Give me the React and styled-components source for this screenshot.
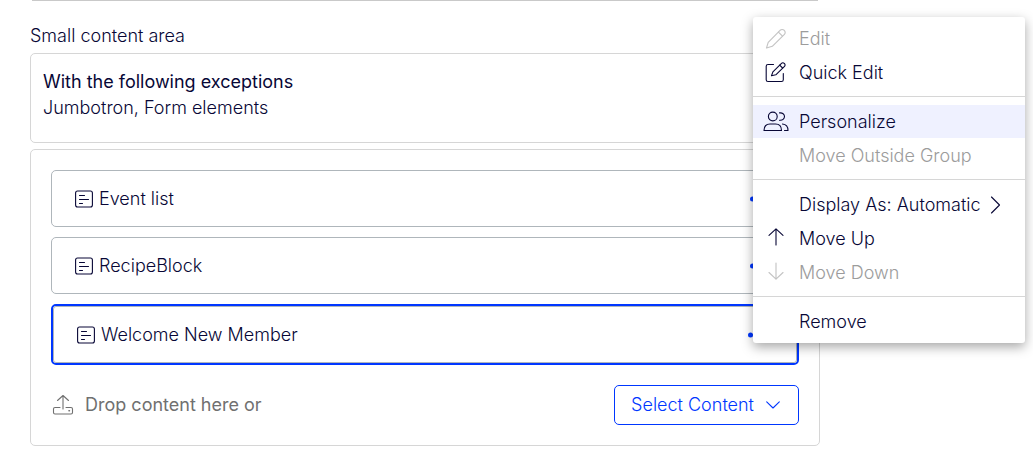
import React from "react";
import styled, { createGlobalStyle, css } from "styled-components";

const GlobalStyle = createGlobalStyle`
  *, *::before, *::after { box-sizing: border-box; }
  body {
    margin: 0;
    background: #ffffff;
    color: #080736;
    font-family: Inter, "Liberation Sans", sans-serif;
    font-size: 18px;
    font-weight: 300;
    line-height: 26px;
  }
  button { font: inherit; cursor: pointer; }
  svg { display: block; flex: none; }
`;

const Page = styled.div`
  position: relative;
`;

const Main = styled.main`
  padding: 0 213px 16px 30px;
`;

const PreviousPanel = styled.div`
  height: 1px;
  margin: 0 2px;
  background: #c9c9c9;
`;

const FieldLabel = styled.h2`
  margin: 22px 0 4px;
  font-size: 18px;
  font-weight: 300;
  line-height: 26px;
`;

const Panel = styled.section`
  border: 1px solid #d6d6d6;
  border-radius: 5px;
`;

const RulesPanel = styled(Panel)`
  padding: 15px 12px 21px;
  margin-bottom: 6px;
`;

const RulesTitle = styled.h3`
  margin: 0;
  font-size: 18px;
  font-weight: 400;
  line-height: 26px;
`;

const RulesText = styled.p`
  margin: 0;
`;

const ContentPanel = styled(Panel)`
  padding: 20px;
`;

const BlockList = styled.ul`
  display: flex;
  flex-direction: column;
  gap: 10px;
  margin: 0 0 20px;
  padding: 0;
  list-style: none;
`;

const BlockFrame = styled.li`
  border-radius: 5px;
  ${(p) =>
    p.$selected &&
    css`
      border: 2px solid #0037ff;
    `}
`;

const BlockRow = styled.div`
  display: flex;
  align-items: center;
  gap: 6px;
  height: 57px;
  padding: 0 23px;
  border: 1px solid #afb6bb;
  border-radius: ${(p) => (p.$selected ? 3 : 5)}px;
`;

const BlockName = styled.span`
  flex: 1;
`;

const MoreButton = styled.button`
  display: flex;
  padding: 0;
  border: 0;
  background: none;
  color: #0037ff;
`;

const DropZone = styled.div`
  display: flex;
  align-items: center;
  gap: 10px;
  color: #707070;
  font-weight: 400;
`;

const DropText = styled.span`
  flex: 1;
`;

const SelectButton = styled.button`
  display: flex;
  align-items: center;
  gap: 12px;
  height: 40px;
  padding: 0 18px 0 16px;
  border: 1px solid #0037ff;
  border-radius: 5px;
  background: #ffffff;
  color: #0037ff;
  font-weight: 300;
`;

const Menu = styled.div`
  position: absolute;
  top: 17px;
  right: 8px;
  display: flex;
  flex-direction: column;
  gap: 1px;
  width: 272px;
  padding: 5px 0;
  border-radius: 3px;
  background: #ffffff;
  box-shadow: 0 4px 12px rgba(0, 0, 0, 0.35);
`;

const MenuItem = styled.button`
  display: flex;
  align-items: center;
  height: 33px;
  padding: 0;
  border: 0;
  background: ${(p) => (p.$active ? "#eff1ff" : "transparent")};
  color: #080736;
  text-align: left;

  &:disabled {
    color: #9c9c9c;
    cursor: default;
  }
`;

const MenuIcon = styled.span`
  display: flex;
  justify-content: center;
  width: 46px;
  opacity: ${(p) => (p.$faded ? 0.6 : 1)};
`;

const MenuArrow = styled.span`
  margin-left: 9px;
`;

const Separator = styled.hr`
  width: 100%;
  height: 1px;
  margin: 6px 0 7px;
  border: 0;
  background: #d6d6d6;
`;

const Icon = ({ width = 24, height = 24, children }) => (
  <svg
    width={width}
    height={height}
    viewBox={`0 0 ${width} ${height}`}
    fill="none"
    stroke="currentColor"
    strokeWidth="1.1"
    strokeLinecap="round"
    strokeLinejoin="round"
    aria-hidden="true"
  >
    {children}
  </svg>
);

const BlockIcon = () => (
  <Icon width={18} height={18}>
    <rect x="0.6" y="1" width="16.8" height="16" rx="2" />
    <path d="M4.5 5.5h5M4.5 9.5h9M4.5 13.5h3" />
  </Icon>
);

const DotsIcon = () => (
  <svg width="25" height="6" viewBox="0 0 25 6" fill="currentColor" aria-hidden="true">
    <circle cx="2.5" cy="3" r="2.5" />
    <circle cx="12.5" cy="3" r="2.5" />
    <circle cx="22.5" cy="3" r="2.5" />
  </svg>
);

const UploadIcon = () => (
  <Icon>
    <path d="M12 16V2.500M6.500 7.500L12 2.500L17.500 7.500" />
    <path d="M9 14.500H4a1.500 1.500 0 0 0-1.500 1.500V19.500a1.500 1.500 0 0 0 1.500 1.500H20a1.500 1.500 0 0 0 1.500-1.500V16a1.500 1.500 0 0 0-1.500-1.500H15" />
    <path d="M18 17.800h.4" strokeWidth="1.600" />
  </Icon>
);

const ChevronDown = () => (
  <Icon width={14} height={8}>
    <path d="M0.7 0.8L7 7L13.3 0.8" />
  </Icon>
);

const ChevronRight = () => (
  <Icon width={11} height={18}>
    <path d="M1.5 1L9.5 9L1.5 17" />
  </Icon>
);

const PencilIcon = () => (
  <Icon width={22} height={22}>
    <path d="M1.500 20L3.200 14.300L15.300 2.200a2.600 2.600 0 0 1 3.700 0l.4.4a2.600 2.600 0 0 1 0 3.700L7.300 18.300Z" />
    <path d="M13.400 4.100l4.100 4.100" />
  </Icon>
);

const QuickEditIcon = () => (
  <Icon width={24} height={22}>
    <path d="M9.500 2.500H4A1.800 1.800 0 0 0 2.200 4.300V17.700A1.800 1.800 0 0 0 4 19.500H17.500a1.800 1.800 0 0 0 1.800-1.800V11.500" />
    <path d="M7.500 13.800L8.900 9.900L17.500 1.300a1.900 1.900 0 0 1 2.700 0l.3.3a1.900 1.900 0 0 1 0 2.700L11.800 12.800Z" />
    <path d="M15.700 3.100l2.900 2.900" />
  </Icon>
);

const PeopleIcon = () => (
  <Icon width={26} height={22}>
    <circle cx="9.800" cy="5.500" r="4.400" />
    <path d="M1 19.500c0-4.400 2.500-6.500 6-6.500h5.500c3.500 0 6 2.100 6 6.500Z" />
    <path d="M16.500 1.900c3 -.4 5 1.300 5 3.600s-2 4.100-5 3.700M19.500 13c3.300.3 5.500 2.500 5.500 6.500h-3.500" />
  </Icon>
);

const ArrowUp = () => (
  <Icon width={16} height={22}>
    <path d="M8 17V0.800M1 7.300L8 0.800L15 7.300" />
  </Icon>
);

const ArrowDown = () => (
  <Icon width={16} height={22}>
    <path d="M8 1V17.200M1 10.500L8 17.200L15 10.500" />
  </Icon>
);

const blocks = [
  { name: "Event list" },
  { name: "RecipeBlock" },
  { name: "Welcome New Member", selected: true },
];

const menuGroups = [
  [
    { label: "Edit", icon: PencilIcon, disabled: true },
    { label: "Quick Edit", icon: QuickEditIcon },
  ],
  [
    { label: "Personalize", icon: PeopleIcon, active: true },
    { label: "Move Outside Group", disabled: true },
  ],
  [
    { label: "Display As: Automatic", submenu: true },
    { label: "Move Up", icon: ArrowUp },
    { label: "Move Down", icon: ArrowDown, disabled: true },
  ],
  [{ label: "Remove" }],
];

export default function App() {
  return (
    <Page>
      <GlobalStyle />
      <Main>
        <PreviousPanel />
        <FieldLabel>Small content area</FieldLabel>
        <RulesPanel>
          <RulesTitle>With the following exceptions</RulesTitle>
          <RulesText>Jumbotron, Form elements</RulesText>
        </RulesPanel>
        <ContentPanel>
          <BlockList>
            {blocks.map((block) => (
              <BlockFrame key={block.name} $selected={block.selected}>
                <BlockRow $selected={block.selected}>
                  <BlockIcon />
                  <BlockName>{block.name}</BlockName>
                  <MoreButton type="button" aria-label={`Options for ${block.name}`}>
                    <DotsIcon />
                  </MoreButton>
                </BlockRow>
              </BlockFrame>
            ))}
          </BlockList>
          <DropZone>
            <UploadIcon />
            <DropText>Drop content here or</DropText>
            <SelectButton type="button">
              Select Content
              <ChevronDown />
            </SelectButton>
          </DropZone>
        </ContentPanel>
      </Main>
      <Menu role="menu">
        {menuGroups.map((group, index) => (
          <React.Fragment key={group[0].label}>
            {index > 0 && <Separator />}
            {group.map(({ label, icon: Glyph, disabled, active, submenu }) => (
              <MenuItem key={label} type="button" role="menuitem" disabled={disabled} $active={active}>
                <MenuIcon $faded={disabled}>{Glyph && <Glyph />}</MenuIcon>
                {label}
                {submenu && (
                  <MenuArrow>
                    <ChevronRight />
                  </MenuArrow>
                )}
              </MenuItem>
            ))}
          </React.Fragment>
        ))}
      </Menu>
    </Page>
  );
}
